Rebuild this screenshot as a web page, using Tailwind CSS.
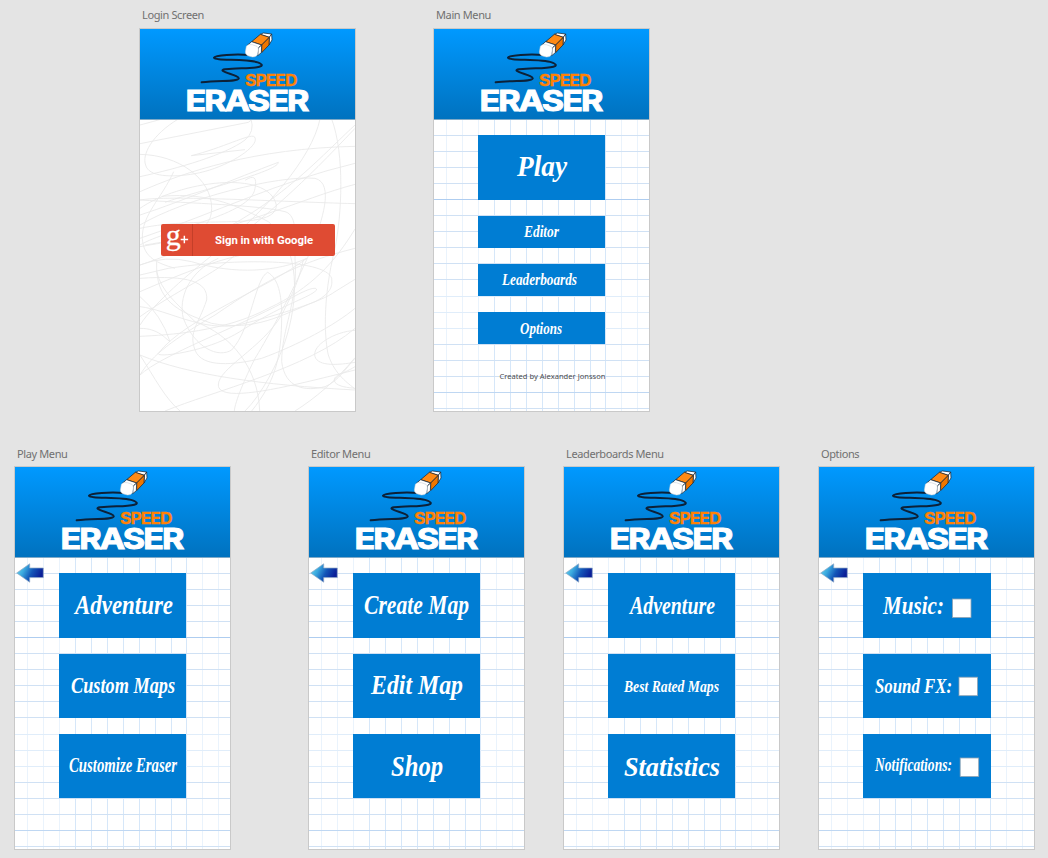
<!DOCTYPE html>
<html lang="en">
<head>
<meta charset="utf-8">
<title>Speed Eraser screens</title>
<script src="https://cdn.jsdelivr.net/npm/@tailwindcss/browser@4"></script>
</head>
<body class="w-[1048px] h-[858px] overflow-hidden bg-[#e4e4e4] font-['Noto_Sans',sans-serif]">

<svg width="0" height="0" class="absolute">
  <defs>
    <linearGradient id="arrowFill" x1="0" y1="0" x2="1" y2=".35">
      <stop offset="0" stop-color="#6fe0f4"/><stop offset=".35" stop-color="#3aa8de"/><stop offset=".65" stop-color="#1356b8"/><stop offset="1" stop-color="#0a1f98"/>
    </linearGradient>
    <symbol id="logo" viewBox="0 0 215 90">
      <g transform="translate(-5 -24) scale(.33333)">
        <path d="M345 150C300 147 240 150 237 158C236 168 335 160 368 172C400 184 366 189 320 190C280 192 256 192 264 198C274 205 314 212 311 221C306 231 250 225 200 232" fill="none" stroke="#0c2138" stroke-width="6" stroke-linecap="round"/>
        <g transform="translate(314 74)" stroke="#1b2530" stroke-width="2.2" stroke-linejoin="round">
          <path d="M62 14L71 10L96 13L89 23Z" fill="#fff"/>
          <path d="M89 23L96 13L97 31L88 46Z" fill="#fff"/>
          <path d="M36 36L62 14L89 23L66 46Z" fill="#ff8a14"/>
          <path d="M66 46L89 23L88 46L66 69Z" fill="#ee7600"/>
          <path d="M24 46L36 36L66 46L56 55Z" fill="#fff"/>
          <path d="M56 55L66 46L65 69L54 78Z" fill="#fff"/>
          <path d="M20 50Q25 42 38 45L52 50Q57 53 56 60L53 76Q48 83 38 82L24 78Q17 75 17 67Z" fill="#fff" stroke="#c2ccd4" stroke-width="1.6"/>
        </g>
      </g>
      <text x="105" y="56.5" textLength="51.5" lengthAdjust="spacingAndGlyphs" letter-spacing="-.8" font-family="Inter" font-weight="700" font-size="15.8" fill="#ff8205" stroke="#ff8205" stroke-width=".3">SPEED</text>
      <text x="45.5" y="82" textLength="122" lengthAdjust="spacingAndGlyphs" letter-spacing="-1.6" font-family="Inter" font-weight="700" font-size="28.6" fill="#fff" stroke="#fff" stroke-width=".9">ERASER</text>
    </symbol>
    <symbol id="arrow" viewBox="0 0 28 20">
      <path d="M.7 10L13.7 .8V5H27.3V14.6H13.7V19.2Z" fill="url(#arrowFill)" stroke="#8fa9c4" stroke-width=".7"/>
    </symbol>
    <symbol id="grid" viewBox="0 1 215 291">
      <g fill="none">
        <path stroke="#eaf3fc" d="M12.5 0V292M28.5 0V292M44.5 0V292M187.5 0V292M203.5 0V292"/>
        <path stroke="#d6e7f9" d="M60.5 0V292M76.5 0V292M92.5 0V292M108.5 0V292M124.5 0V292M140.5 0V292M156.5 0V292M171.5 0V292"/>
        <path stroke="#d0e1f4" d="M0 16.5H215M0 32.5H215M0 48.5H215M0 64.5H215M0 96.5H215M0 112.5H215M0 128.5H215M0 144.5H215M0 160.5H215M0 225.5H215M0 241.5H215M0 257.5H215M0 289.5H215"/>
        <path stroke="#e0edfa" d="M0 177.5H215M0 193.5H215M0 209.5H215"/>
        <path stroke="#aecdf0" d="M0 80.5H215"/>
        <path stroke="#bfd7f2" d="M0 273.5H215"/>
      </g>
    </symbol>
  </defs>
</svg>

<main class="flex flex-col h-full">
  <section class="flex h-[439px] pl-[139px] pt-2 gap-[77px]">
    <article class="w-[217px]">
      <h2 class="h-5 pl-[3px] text-[11px] tracking-[-0.38px] leading-[13px] text-[#707070]">Login Screen</h2>
      <div class="h-[384px] border border-[#c9c9c9] bg-white flex flex-col">
        <header class="h-[91px] bg-linear-to-b from-[#0099ff] to-[#0072bf] border-b border-[#7faac8]"><svg class="w-[215px] h-[90px]"><use href="#logo"/></svg></header>
        <div class="grid h-[291px]">
          <svg class="col-start-1 row-start-1 w-[215px] h-[291px]" viewBox="15 15 645 873" fill="none" stroke="#e9e9e9" stroke-width="2.6">
            <path d="M130 12C50 60 20 120 32 150C40 186 110 188 180 176C280 158 380 90 358 65C345 55 260 100 169 122L330 104"/>
            <path d="M15 86L340 22Q350 16 348 12Q360 50 330 75C270 120 130 160 15 185M15 30Q60 18 80 12"/>
            <path d="M15 118C130 120 230 190 230 280C230 350 160 370 30 390M116 170C80 250 20 300 22 370C25 430 70 445 120 460"/>
            <path d="M15 230C150 170 360 100 660 94M15 255C100 240 430 260 660 266M15 300C140 260 300 190 430 142C430 170 180 230 90 262"/>
            <path d="M555 12C530 130 400 280 220 430C170 470 60 560 15 630M590 12C630 120 620 300 600 400C560 560 570 680 580 720C600 780 640 805 660 822"/>
            <path d="M660 30C520 160 380 330 15 450M660 40C500 210 400 300 240 420M660 145C430 200 250 290 15 370M660 208C500 250 300 350 15 395"/>
            <path d="M15 330C150 250 430 180 540 190C600 205 560 320 530 400C470 540 380 700 360 730C330 790 300 860 298 888"/>
            <path d="M15 280C130 200 400 160 424 270C424 350 200 300 15 340M330 196Q370 170 360 220C350 300 100 340 15 390"/>
            <path d="M80 244C230 230 320 280 400 320C500 400 490 560 450 680C430 740 380 840 330 888"/>
            <path d="M15 255C170 265 370 270 450 290C490 300 480 380 480 430C490 560 440 640 440 740C450 820 510 830 570 815C610 800 640 750 660 730"/>
            <path d="M660 342C600 440 530 520 400 580C270 650 100 660 15 664M660 400C500 440 400 490 240 600C120 670 50 720 15 780"/>
            <path d="M65 440C60 560 130 590 230 625C360 650 440 600 540 560C600 530 590 500 590 490C570 430 300 430 100 460L15 480"/>
            <path d="M65 470C80 530 120 560 180 620C290 660 370 760 374 888M15 490C160 480 220 500 215 555C190 630 160 650 180 705C200 760 300 750 380 730C490 690 600 630 660 580"/>
            <path d="M250 430C160 470 130 550 145 610C180 700 250 730 290 705C350 640 360 490 398 472C430 490 440 540 440 600C440 730 420 800 350 888"/>
            <path d="M515 430C400 520 150 610 70 715C60 730 230 710 330 640C460 560 520 550 545 525C545 510 500 530 450 560C300 640 80 720 15 780"/>
            <path d="M15 545Q80 600 105 680C90 670 70 640 15 640M15 575C100 585 200 650 310 630C430 600 560 560 600 530L660 493"/>
            <path d="M505 435C490 500 480 520 440 600C380 700 250 760 250 810C250 870 480 810 660 765M15 720C60 790 90 850 135 888M90 888C230 830 520 760 660 640"/>
            <path d="M15 720C160 780 380 810 660 825M660 646C600 650 530 690 540 725C550 755 610 750 660 742M660 728C600 800 540 850 480 888M660 755C620 780 590 780 600 802C610 815 640 818 660 820"/>
            <path d="M15 450Q90 420 170 440C300 480 430 470 515 430M15 530C130 480 230 440 320 420M15 605C120 530 250 470 300 420"/>
          </svg>
          <button class="col-start-1 row-start-1 ml-[21px] mt-[104px] w-[174px] h-8 rounded-xs bg-[#df4b33] flex items-center text-white text-[10.5px] font-bold font-['Roboto',sans-serif]">
            <svg class="w-8 h-8 overflow-visible border-r border-[#c43f29]" viewBox="0 0 32 32"><text x="5" y="21.5" font-family="Liberation Serif" font-weight="400" font-size="31" fill="#fff" stroke="#fff" stroke-width=".3">g</text><path fill="none" stroke="#fff" stroke-width="1.5" d="M20.3 15.5H28M24.1 11.6V19.4"/></svg>
            <svg class="h-8 w-[142px]"><text x="22" y="19.5" textLength="98" lengthAdjust="spacingAndGlyphs" fill="#fff" font-size="11">Sign in with Google</text></svg>
          </button>
        </div>
      </div>
    </article>

    <article class="w-[217px]">
      <h2 class="h-5 pl-[3px] text-[11px] tracking-[-0.38px] leading-[13px] text-[#707070]">Main Menu</h2>
      <div class="h-[384px] border border-[#c9c9c9] bg-white flex flex-col">
        <header class="h-[91px] bg-linear-to-b from-[#0099ff] to-[#0072bf] border-b border-[#7faac8]"><svg class="w-[215px] h-[90px]"><use href="#logo"/></svg></header>
        <div class="grid h-[291px]">
          <svg class="col-start-1 row-start-1 w-[215px] h-[291px]"><use href="#grid"/></svg>
          <nav class="col-start-1 row-start-1 pl-11 pt-[15px] flex flex-col gap-4 font-['Brush_Script_MT','Liberation_Serif',serif] font-bold italic">
            <svg class="w-[127px] h-[65px] overflow-visible bg-[#007dd3] fill-white"><text x="39" y="41" font-size="30" textLength="50" lengthAdjust="spacingAndGlyphs">Play</text></svg>
            <svg class="w-[127px] h-8 overflow-visible bg-[#007dd3] fill-white"><text x="46" y="21" font-size="17" textLength="35" lengthAdjust="spacingAndGlyphs">Editor</text></svg>
            <svg class="w-[127px] h-8 overflow-visible bg-[#007dd3] fill-white"><text x="24" y="21" font-size="17" textLength="75" lengthAdjust="spacingAndGlyphs">Leaderboards</text></svg>
            <svg class="w-[127px] h-8 overflow-visible bg-[#007dd3] fill-white"><text x="42" y="21.5" font-size="17" textLength="42" lengthAdjust="spacingAndGlyphs">Options</text></svg>
            <svg class="w-[140px] h-8 fill-[#4d4d4d] font-['Noto_Sans',sans-serif] font-normal not-italic"><text x="21.5" y="19" font-size="7.5" textLength="106" lengthAdjust="spacingAndGlyphs">Created by Alexander Jonsson</text></svg>
          </nav>
        </div>
      </div>
    </article>
  </section>

  <section class="flex pl-3.5 pt-2">
    <article class="w-[217px] mr-[77px]">
      <h2 class="h-[19px] pl-[3px] text-[11px] tracking-[-0.38px] leading-[13px] text-[#707070]">Play Menu</h2>
      <div class="h-[384px] border border-[#c9c9c9] bg-white flex flex-col">
        <header class="h-[91px] bg-linear-to-b from-[#0099ff] to-[#0072bf] border-b border-[#7faac8]"><svg class="w-[215px] h-[90px]"><use href="#logo"/></svg></header>
        <div class="grid h-[291px]">
          <svg class="col-start-1 row-start-1 w-[215px] h-[291px]"><use href="#grid"/></svg>
          <svg class="col-start-1 row-start-1 w-7 h-5 ml-px mt-[5px]"><use href="#arrow"/></svg>
          <nav class="col-start-1 row-start-1 pl-11 pt-[15px] flex flex-col gap-4 font-['Brush_Script_MT','Liberation_Serif',serif] font-bold italic">
            <svg class="w-[127.4px] h-[65px] overflow-visible bg-[#007dd3] fill-white"><text x="16" y="41" font-size="28" textLength="98" lengthAdjust="spacingAndGlyphs">Adventure</text></svg>
            <svg class="w-[127.4px] h-16 overflow-visible bg-[#007dd3] fill-white"><text x="12" y="39" font-size="23" textLength="104" lengthAdjust="spacingAndGlyphs">Custom Maps</text></svg>
            <svg class="w-[127.4px] h-16 overflow-visible bg-[#007dd3] fill-white"><text x="10" y="37.5" font-size="20" textLength="108" lengthAdjust="spacingAndGlyphs">Customize Eraser</text></svg>
          </nav>
        </div>
      </div>
    </article>

    <article class="w-[217px] mr-[38px]">
      <h2 class="h-[19px] pl-[3px] text-[11px] tracking-[-0.38px] leading-[13px] text-[#707070]">Editor Menu</h2>
      <div class="h-[384px] border border-[#c9c9c9] bg-white flex flex-col">
        <header class="h-[91px] bg-linear-to-b from-[#0099ff] to-[#0072bf] border-b border-[#7faac8]"><svg class="w-[215px] h-[90px]"><use href="#logo"/></svg></header>
        <div class="grid h-[291px]">
          <svg class="col-start-1 row-start-1 w-[215px] h-[291px]"><use href="#grid"/></svg>
          <svg class="col-start-1 row-start-1 w-7 h-5 ml-px mt-[5px]"><use href="#arrow"/></svg>
          <nav class="col-start-1 row-start-1 pl-11 pt-[15px] flex flex-col gap-4 font-['Brush_Script_MT','Liberation_Serif',serif] font-bold italic">
            <svg class="w-[127px] h-[65px] overflow-visible bg-[#007dd3] fill-white"><text x="11" y="41" font-size="27" textLength="105" lengthAdjust="spacingAndGlyphs">Create Map</text></svg>
            <svg class="w-[127px] h-16 overflow-visible bg-[#007dd3] fill-white"><text x="18" y="39.5" font-size="27" textLength="92" lengthAdjust="spacingAndGlyphs">Edit Map</text></svg>
            <svg class="w-[127px] h-16 overflow-visible bg-[#007dd3] fill-white"><text x="38" y="41.5" font-size="29" textLength="52" lengthAdjust="spacingAndGlyphs">Shop</text></svg>
          </nav>
        </div>
      </div>
    </article>

    <article class="w-[217px] mr-[38px]">
      <h2 class="h-[19px] pl-[3px] text-[11px] tracking-[-0.38px] leading-[13px] text-[#707070]">Leaderboards Menu</h2>
      <div class="h-[384px] border border-[#c9c9c9] bg-white flex flex-col">
        <header class="h-[91px] bg-linear-to-b from-[#0099ff] to-[#0072bf] border-b border-[#7faac8]"><svg class="w-[215px] h-[90px]"><use href="#logo"/></svg></header>
        <div class="grid h-[291px]">
          <svg class="col-start-1 row-start-1 w-[215px] h-[291px]"><use href="#grid"/></svg>
          <svg class="col-start-1 row-start-1 w-7 h-5 ml-px mt-[5px]"><use href="#arrow"/></svg>
          <nav class="col-start-1 row-start-1 pl-11 pt-[15px] flex flex-col gap-4 font-['Brush_Script_MT','Liberation_Serif',serif] font-bold italic">
            <svg class="w-[127.4px] h-[65px] overflow-visible bg-[#007dd3] fill-white"><text x="22" y="41" font-size="25" textLength="85" lengthAdjust="spacingAndGlyphs">Adventure</text></svg>
            <svg class="w-[127.4px] h-16 overflow-visible bg-[#007dd3] fill-white"><text x="16" y="37.5" font-size="16" textLength="95" lengthAdjust="spacingAndGlyphs">Best Rated Maps</text></svg>
            <svg class="w-[127.4px] h-16 overflow-visible bg-[#007dd3] fill-white"><text x="16" y="41.5" font-size="28" textLength="96" lengthAdjust="spacingAndGlyphs">Statistics</text></svg>
          </nav>
        </div>
      </div>
    </article>

    <article class="w-[217px]">
      <h2 class="h-[19px] pl-[3px] text-[11px] tracking-[-0.38px] leading-[13px] text-[#707070]">Options</h2>
      <div class="h-[384px] border border-[#c9c9c9] bg-white flex flex-col">
        <header class="h-[91px] bg-linear-to-b from-[#0099ff] to-[#0072bf] border-b border-[#7faac8]"><svg class="w-[215px] h-[90px]"><use href="#logo"/></svg></header>
        <div class="grid h-[291px]">
          <svg class="col-start-1 row-start-1 w-[215px] h-[291px]"><use href="#grid"/></svg>
          <svg class="col-start-1 row-start-1 w-7 h-5 ml-px mt-[5px]"><use href="#arrow"/></svg>
          <nav class="col-start-1 row-start-1 pl-11 pt-[15px] flex flex-col gap-4 font-['Brush_Script_MT','Liberation_Serif',serif] font-bold italic">
            <svg class="w-[128px] h-[65px] overflow-visible bg-[#007dd3] fill-white"><text x="20" y="40.5" font-size="26" textLength="61" lengthAdjust="spacingAndGlyphs">Music:</text><rect x="89.5" y="26" width="18.5" height="18.5" stroke="#8fa3b3" stroke-width=".8"/></svg>
            <svg class="w-[128px] h-16 overflow-visible bg-[#007dd3] fill-white"><text x="12" y="39" font-size="21" textLength="77" lengthAdjust="spacingAndGlyphs">Sound FX:</text><rect x="96" y="23.2" width="18.5" height="18.5" stroke="#8fa3b3" stroke-width=".8"/></svg>
            <svg class="w-[128px] h-16 overflow-visible bg-[#007dd3] fill-white"><text x="12" y="37" font-size="18" textLength="77" lengthAdjust="spacingAndGlyphs">Notifications:</text><rect x="97.2" y="24" width="18.5" height="18.5" stroke="#8fa3b3" stroke-width=".8"/></svg>
          </nav>
        </div>
      </div>
    </article>
  </section>
</main>
</body>
</html>
